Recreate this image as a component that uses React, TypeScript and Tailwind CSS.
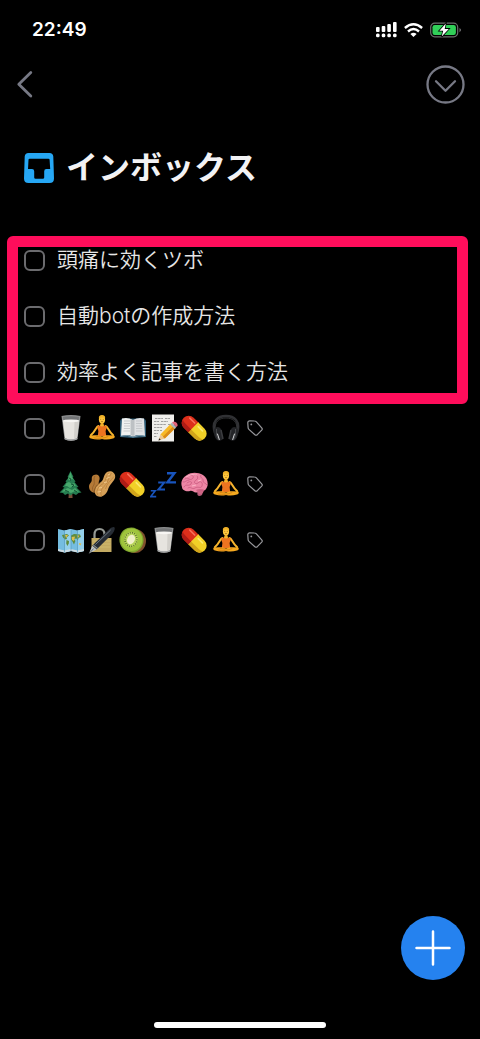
import type { ReactNode } from "react";

const Glyph = ({ label, children }: { label: string, children: ReactNode }) => (
    <svg role="img" aria-label={label} viewBox="0 0 28 28" className="size-7 shrink-0">
        {children}
    </svg>
);

const Milk = () => (
    <Glyph label="牛乳">
        <path d="M4.5 2Q14 0 23.5 2L20.5 25Q14 28.5 7.5 25Z" fill="#8b8d8e" />
        <path d="M6 3Q14 1.4 22 3L21.5 7H6.5Z" fill="#727476" />
        <path d="M5.8 6.8Q14 8.4 22.2 6.8L20 24Q14 27 8 24Z" fill="#e6e4df" />
        <path d="M17.5 8L22 7L20 23.5L17 25Z" fill="#d2d0cb" />
        <ellipse cx="14" cy="6.8" rx="8.2" ry="1.4" fill="#f7f6f3" />
        <path d="M7.5 24Q14 27 20.5 24L20.3 25.5Q14 28 7.7 25.5Z" fill="#a5a6a6" />
    </Glyph>
);

const Yoga = () => (
    <Glyph label="瞑想">
        <path d="M10.5 12C8 12.5 8 16.5 2.8 21.2M17.5 12C20 12.5 20 16.5 25.2 21.2" fill="none" stroke="#f6b52e" strokeWidth="2" strokeLinecap="round" />
        <path d="M12.6 8H15.4V12H12.6Z" fill="#e99d1c" />
        <path d="M9.8 11.6Q14 12.6 18.2 11.6L18.7 14L17.6 17L18.2 22H9.8L10.4 17L9.3 14Z" fill="#ed7420" />
        <path d="M11.6 11.2Q14 14 16.4 11.2L15.4 10.2H12.6Z" fill="#f6b52e" />
        <path d="M2 21.4Q6 21 10 21.2L14 22.4L18 21.2Q22 21 26 21.4Q28 23 25 24.6Q19 26.4 14 25Q9 26.4 3 24.6Q0 23 2 21.4Z" fill="#f5a91f" />
        <path d="M6 24Q14 25.4 20 22.6M13 23L8 22.4" fill="none" stroke="#cf7913" strokeWidth=".7" strokeLinecap="round" />
        <ellipse cx="14" cy="5.6" rx="3.1" ry="3.9" fill="#ffc83d" />
        <path d="M10.9 4.6Q10.4 1 14 1Q17.6 1 17.1 4.6Q14 2.2 10.9 4.6Z" fill="#f0b127" />
        <path d="M12.2 5.4H13.2M14.8 5.4H15.8M13 7.6H15" stroke="#8d5912" strokeWidth=".6" />
    </Glyph>
);

const Book = () => (
    <Glyph label="本">
        <path d="M1 6.5L3 4.5H25L27 6.5V23L15 24H13L1 23Z" fill="#29566f" />
        <path d="M3 4.5Q9 3 14 6V22.5Q8 20 2 22Z" fill="#f0f1f0" />
        <path d="M25 4.5Q19 3 14 6V22.5Q20 20 26 22Z" fill="#dfe1e3" />
        <path d="M11.5 5.2L14 6V22L11.5 21ZM14 6L15.5 5.3V21.3L14 22Z" fill="#bdc1c4" />
        <path d="M5 7H11M5 9.5H11M5 12H11M4.8 14.5H11M4.5 17H11M17 7H23M17 9.5H23M17 12H23M17 14.5H23.3M17 17H23.5" stroke="#b9bcbf" strokeWidth=".7" />
        <path d="M2 22Q9 20.5 14 23Q20 20.5 26 22" fill="none" stroke="#8fa9b8" strokeWidth=".8" />
    </Glyph>
);

const Memo = () => (
    <Glyph label="メモ">
        <path d="M2 .5H24V27.5H2Z" fill="#efeeeb" />
        <path d="M5 4.5H13M15 4.5H20M4 7.5H9M11 7.5H18M4 10.5H16M18 10.5H20M4 13.5H12M4 16.5H9M10 16.5H12M4 19.5H8M4 22.5H7" stroke="#8a8a8a" strokeWidth=".8" strokeDasharray="2.5 .6" />
        <path d="M8.5 26.5L10.4 20.4L14.8 24.6Z" fill="#edc68f" />
        <path d="M10.4 20.4L21 9.6L25.5 14L14.8 24.6Z" fill="#f7b927" />
        <path d="M12.8 22.8L23.4 12L25.5 14L14.8 24.6Z" fill="#db8c18" />
        <path d="M20.2 10.4L22 8.6L26.4 13L24.7 14.8Z" fill="#aab4b8" />
        <path d="M22 8.6L23.6 7.6Q27.6 8.2 27.6 11.8L26.4 13Z" fill="#e4657a" />
        <path d="M8.5 26.5L9.2 24.2L10.8 25.7Z" fill="#252525" />
    </Glyph>
);

const Pill = () => (
    <Glyph label="薬">
        <g transform="rotate(45 13 14)">
            <path d="M13 7H5.5A7 7 0 0 0 5.5 21H13Z" fill="#dc2f1b" />
            <path d="M12 7H21A7 7 0 0 1 21 21H12Z" fill="#f1d027" />
            <path d="M12 17H23Q26 17 27.5 15.5Q26.5 21 21 21H12Z" fill="#d2a51b" />
            <path d="M12 17H3Q0 17-1 15.5Q0 21 5.5 21H12Z" fill="#ae1c16" />
            <path d="M3 10H10" stroke="#f8705a" strokeWidth="1.6" strokeLinecap="round" />
            <path d="M15 10H21" stroke="#fae96e" strokeWidth="1.6" strokeLinecap="round" />
        </g>
    </Glyph>
);

const Headphones = () => (
    <Glyph label="ヘッドホン">
        <path d="M3 19C-1 7 6 2 14 2S29 7 25 19" fill="none" stroke="#303134" strokeWidth="2.5" />
        <path d="M3.5 16C2 8 7 4 14 4S26 8 24.5 16" fill="none" stroke="#4a4c4f" strokeWidth=".6" />
        <path d="M2 15Q6 11 9 15L11 25Q8 28 5 26Q1 22 2 15ZM26 15Q22 11 19 15L17 25Q20 28 23 26Q27 22 26 15Z" fill="#242528" />
        <path d="M4.5 15Q3.5 22 6.5 26M23.5 15Q24.5 22 21.5 26" fill="none" stroke="#46484b" strokeWidth="1" />
        <path d="M5.5 20L7.3 25.5M22.5 20L20.7 25.5" stroke="#d7d8da" strokeWidth="1" strokeLinecap="round" />
        <path d="M9 16L11 25M19 16L17 25" stroke="#3c3d40" strokeWidth="1.5" />
    </Glyph>
);

const Tree = () => (
    <Glyph label="木">
        <path d="M11.8 23H15.2L15.6 28H11.5Z" fill="#77503a" />
        <path d="M13.5 1L16.5 7L15.5 7.5L18.6 11.5L17.4 12L21.5 17L19.5 17.5L24.5 22.5L21.5 23L19 25L16 23.5L13.5 25.5L11 23.5L8 25L6 23L2.5 22.5L7.5 17.5L5.5 17L9.6 12L8.4 11.5L11.5 7.5L10.5 7Z" fill="#267d50" />
        <path d="M13.5 2L15 7L17 10L15 9L13 11L11 9ZM9.5 13L12 12L15 14L17 13L19 16L16 16L13 18L10 16L8 16ZM7 19.5L11 18L15 20L18 18L22 22L18 21L14 23L9 21L5 22Z" fill="#48a96c" />
        <path d="M12 8L14 9L13 11M14 14L17 15L15 17M8 20L12 22M17 20L20 22" fill="none" stroke="#145437" strokeWidth="1" />
    </Glyph>
);

const Peanuts = () => (
    <Glyph label="ピーナッツ">
        <path d="M6 5C10 3 13 7 11 11C10 14 12 16 10 20C7 25 1 22 1 16.5C1 13.5 4 12.5 3.8 9.5C3.5 7 4.4 5.6 6 5Z" fill="#b57a37" />
        <path d="M17.5 3.5C21-1 28.5 2 27 8C26.2 11 22.5 13.5 20.5 18C19 24 14 28.8 9 26C4 22.5 8 15.5 12 12.8C16 10.5 15 6.5 17.5 3.5Z" fill="#d6a058" />
        <path d="M20.5 3C16.5 9 18.5 12 13 15C9 18 8 22 10 25.5M23.5 3C20 8 20.5 12 17 15.5C13 19 12 22 13.5 26M26 6.5C22.5 11 19 13 17.5 19" fill="none" stroke="#b47c38" strokeWidth=".7" />
        <path d="M19.5 5L22 4M18.5 8.5L22 7M16 12.5L19 12M11 18L14 17.5M9.5 22L13 21.5" stroke="#efc98f" strokeWidth=".9" />
        <path d="M7 6C4.5 10 8 12.5 5 16.5C4 18.5 4.5 20.5 6 22" fill="none" stroke="#8a5826" strokeWidth=".7" />
        <path d="M12 12.8C8 15.5 6 19 6.6 23" fill="none" stroke="#744719" strokeWidth=".8" />
    </Glyph>
);

const Sleep = () => (
    <Glyph label="睡眠">
        <g fill="none" stroke="#1854bd" strokeLinejoin="miter">
            <path d="M17 3.2H24.4L17.4 12.4H26" strokeWidth="2.4" />
            <path d="M8.2 12.6H14.2L8.4 19.6H15" strokeWidth="2" />
            <path d="M.8 20.8H5.2L.8 26.6H6.2" strokeWidth="1.6" />
        </g>
    </Glyph>
);

const Brain = () => (
    <Glyph label="脳">
        <path d="M16 20L23 18L21 25Q18 27 16.5 25Z" fill="#b65b78" />
        <path d="M1 17C-1 12 2 7 6 5C10 2 17 2 22 5C27 8 28 15 25 19C23 22 19 20 17 22C13 24 12 20 9 21C5 22 1 20 1 17Z" fill="#ed86a5" />
        <path d="M15 20Q19 18 23 20Q22 25 18 24Z" fill="#cf6584" />
        <path d="M3 17C5 13 7 17 10 14C12 11 8 11 6 13M4 9C7 6 8 11 11 9C14 7 11 4 9 5M13 5C17 4 18 9 15 10C12 12 14 15 17 13C20 10 22 13 21 16C20 19 17 16 14 18C11 20 10 16 7 18M20 5C18 8 23 8 22 11C22 13 25 13 26 15M2 12C4 13 5 10 8 10M18 21L22 20" fill="none" stroke="#c95c80" strokeWidth=".8" strokeLinecap="round" />
        <path d="M5 7Q10 3 16 5M17 11L20 10M11 16L15 15" fill="none" stroke="#ffc0cf" strokeWidth=".8" />
    </Glyph>
);

const WorldMap = () => (
    <Glyph label="地図">
        <path d="M1 3L7.5 4.5L14 3L20.5 4.5L27 3V25L20.5 26.5L14 25L7.5 26.5L1 25Z" fill="#75bde0" />
        <path d="M7.5 4.5L14 3V25L7.5 26.5ZM20.5 4.5L27 3V25L20.5 26.5Z" fill="#94d0eb" />
        <path d="M5 9L10 8L12 9.5L9.5 11.5L10 13L8 13.5L6 11.5ZM9.5 14L12 15L11.8 17.5L10.4 20L9.2 17.5ZM14 9.5L17 8L23 8.6L24 11L21.6 12L20.8 14.5L19.4 12.4L17 13L18.4 15L17 18.5L15.4 15.6L14 13.6Z" fill="#5e8c3e" />
        <path d="M8 9L11 9L9 12ZM14.6 11L18 10.6L17 15L15 14ZM19.6 9.4L22.4 9.4L21 12ZM22 17L24.4 17.6L23.6 19.4L22 18.6Z" fill="#dfbd4c" />
        <path d="M1 23L7.5 24.5L14 23L20.5 24.5L27 23V25L20.5 26.5L14 25L7.5 26.5L1 25Z" fill="#d0dce1" />
        <path d="M7.5 4.5V26.5M14 3V25M20.5 4.5V26.5" stroke="#4f94b9" strokeWidth=".6" />
    </Glyph>
);

const LockPen = () => (
    <Glyph label="鍵とペン">
        <path d="M6.5 13V8.5Q6.5 3 11.5 3T16.5 8.5V13" fill="none" stroke="#969b96" strokeWidth="2.2" />
        <path d="M3.5 12H23.5V26H3.5Z" fill="#c3aa62" />
        <path d="M4.5 15H22.5M4.5 18H22.5M4.5 21H22.5" stroke="#d0b96f" strokeWidth="1.2" />
        <path d="M4.2 19.8L20 4.2Q24 .4 26.4 1.2Q27.6 3 24.6 7.4L8.6 23.6Z" fill="#262c34" />
        <path d="M7.4 18.6L22.6 4" stroke="#6d7780" strokeWidth="1" />
        <path d="M4.2 19.8L8.6 23.6L1 27.6Z" fill="#bdc3c6" />
        <path d="M5.2 18.8L9.6 22.6" stroke="#89939a" strokeWidth="1.1" />
        <path d="M1 27.5L5.6 22.6" stroke="#42474b" strokeWidth=".7" />
    </Glyph>
);

const Kiwi = () => (
    <Glyph label="キウイ">
        <ellipse cx="16" cy="15" rx="11" ry="12" fill="#80512d" />
        <ellipse cx="12.5" cy="14" rx="12" ry="12.5" transform="rotate(-18 12.5 14)" fill="#80a72e" />
        <ellipse cx="12.5" cy="13.8" rx="10.8" ry="11.3" fill="#9fc43c" />
        <ellipse cx="12" cy="13.5" rx="7" ry="7.6" fill="#b7d45a" />
        <ellipse cx="12" cy="13.5" rx="6" ry="6.8" fill="none" stroke="#3e4d20" strokeWidth="1.4" strokeDasharray=".7 1.5" />
        <ellipse cx="12" cy="13.5" rx="3.8" ry="5" transform="rotate(25 12 13.5)" fill="#f1f0c9" />
    </Glyph>
);

const TagIcon = () => (
    <svg aria-label="タグ" role="img" viewBox="0 0 16 16" className="ml-1 size-4" fill="none" stroke="#98989c" strokeWidth="1.2" strokeLinejoin="round">
        <path d="M.8 2.8Q.8.8 2.8.8L7.5 1Q8.6 1 9.4 1.8L14.7 7.8Q15.8 9 14.7 10.2L10.3 14.7Q9.1 15.7 7.9 14.7L1.9 9.4Q1.1 8.7 1.1 7.6Z" />
        <circle cx="4.3" cy="4.4" r=".9" fill="#98989c" stroke="none" />
    </svg>
);

const StatusBar = () => (
    <div className="flex h-14 items-center justify-between pl-8 pr-4.5 pt-1 text-white">
        <span className="text-[19px] leading-6 font-semibold">22:49</span>
        <div className="flex items-center gap-[7px]">
            <svg viewBox="0 0 21 16" className="h-4 w-[21px]" fill="currentColor">
                <rect x="0" y="5" width="3.6" height="5" rx="1" />
                <rect x="5.7" y="4" width="3.6" height="6" rx="1" />
                <rect x="11.3" y="2" width="3.6" height="8" rx="1" />
                <rect x="17" y="0" width="3.6" height="10" rx="1" />
                <rect x="0" y="11.5" width="3.6" height="3.8" rx="1.5" />
                <rect x="5.7" y="11.5" width="3.6" height="3.8" rx="1.5" />
                <rect x="11.3" y="11.5" width="3.6" height="3.8" rx="1.5" />
                <rect x="17" y="11.5" width="3.6" height="3.8" rx="1.5" />
            </svg>
            <svg viewBox="0 0 19 15" className="h-[15px] w-[19px]" fill="none" stroke="currentColor" strokeWidth="2.4">
                <path d="M.9 5Q9.5-2.4 18.1 5M4 8.5Q9.5 3.6 15 8.5" />
                <path d="M9.5 14L6.4 10.9Q9.5 8.4 12.6 10.9Z" fill="currentColor" stroke="none" />
            </svg>
            <svg viewBox="0 0 32 16" className="h-4 w-8">
                <rect x=".7" y="1.2" width="27" height="13.6" rx="4" fill="none" stroke="#6c706d" strokeWidth="1.2" />
                <rect x="2.5" y="3" width="23.4" height="10" rx="2.2" fill="#31cf58" />
                <path d="M29.5 6Q31 7 31 8T29.5 10.2Z" fill="#77777a" />
                <path d="M15.8 1.4L9.4 8.8H13.2L11.7 14.6L18.8 6.9H14.7Z" fill="#fff" stroke="#000" strokeWidth="1.6" paintOrder="stroke" />
            </svg>
        </div>
    </div>
);

const TaskRow = ({ children }: { children: ReactNode }) => (
    <li>
        <label className="flex h-14 items-center gap-3 px-6 text-[21px] leading-8 text-[#e6e6e6]">
            <input type="checkbox" className="m-0 size-[21px] shrink-0 appearance-none rounded-md border-2 border-[#6b6b6e] bg-black checked:bg-[#2481ef]" />
            <span className="flex items-center gap-[3px] font-[350]">{children}</span>
        </label>
    </li>
);

export default function App() {
    return (
        <main className="relative flex min-h-screen w-full flex-col bg-black font-[Inter,'Noto_Sans_CJK_JP',sans-serif]">
            <StatusBar />
            <header className="flex h-14 items-center justify-between px-[15px]">
                <button type="button" aria-label="戻る">
                    <svg viewBox="0 0 20 28" className="h-7 w-5" fill="none" stroke="#777985" strokeWidth="2.8" strokeLinecap="round" strokeLinejoin="round">
                        <path d="M15.8 2.5L3.8 14.2L15.8 26" />
                    </svg>
                </button>
                <button type="button" aria-label="メニュー">
                    <svg viewBox="0 0 39 39" className="size-[39px]" fill="none" stroke="#777985" strokeWidth="2.3" strokeLinecap="round" strokeLinejoin="round">
                        <circle cx="19.5" cy="19.5" r="18" />
                        <path d="M10 16.3L19.5 25.8L29 16.3" />
                    </svg>
                </button>
            </header>
            <div className="flex items-center gap-3 px-6 pt-8">
                <svg viewBox="0 0 30 30" className="size-[30px]">
                    <path fillRule="evenodd" d="M4.5 0H25.5Q29 0 29.3 3.5L30 25.5Q30 30 25.5 30H4.5Q0 30 0 25.5L.7 3.5Q1 0 4.5 0ZM5.6 5.8Q4.6 5.8 4.5 6.8L4 16H8Q10.2 16 10.2 18.2V24.4Q10.2 25.8 11.6 25.8H18.8Q20.2 25.8 20.2 24.4V18.2Q20.2 16 22.4 16H26.2L25.6 6.8Q25.5 5.8 24.5 5.8Z" fill="#26a7f4" />
                </svg>
                <h1 className="text-[32px] leading-12 font-bold text-[#f2f2f4]">インボックス</h1>
            </div>
            <div className="pt-10">
                <div className="relative">
                    <ul>
                        <TaskRow>頭痛に効くツボ</TaskRow>
                        <TaskRow>自動botの作成方法</TaskRow>
                        <TaskRow>効率よく記事を書く方法</TaskRow>
                    </ul>
                    <div className="pointer-events-none absolute top-1 right-3 -bottom-1 left-[7px] rounded-md border-[11px] border-[#ff0d5b]" />
                </div>
                <ul>
                    <TaskRow><Milk /><Yoga /><Book /><Memo /><Pill /><Headphones /><TagIcon /></TaskRow>
                    <TaskRow><Tree /><Peanuts /><Pill /><Sleep /><Brain /><Yoga /><TagIcon /></TaskRow>
                    <TaskRow><WorldMap /><LockPen /><Kiwi /><Milk /><Pill /><Yoga /><TagIcon /></TaskRow>
                </ul>
            </div>
            <button type="button" aria-label="追加" className="fixed right-[15px] bottom-[59px] flex size-16 items-center justify-center rounded-full bg-[#2582ef]">
                <svg viewBox="0 0 36 36" className="size-9" stroke="#fff" strokeWidth="2.5" strokeLinecap="round">
                    <path d="M18 1.5V34.5M1.5 18H34.5" />
                </svg>
            </button>
            <div className="mx-auto mt-auto mb-[11px] h-1.5 w-43 rounded-full bg-white" />
        </main>
    );
}
